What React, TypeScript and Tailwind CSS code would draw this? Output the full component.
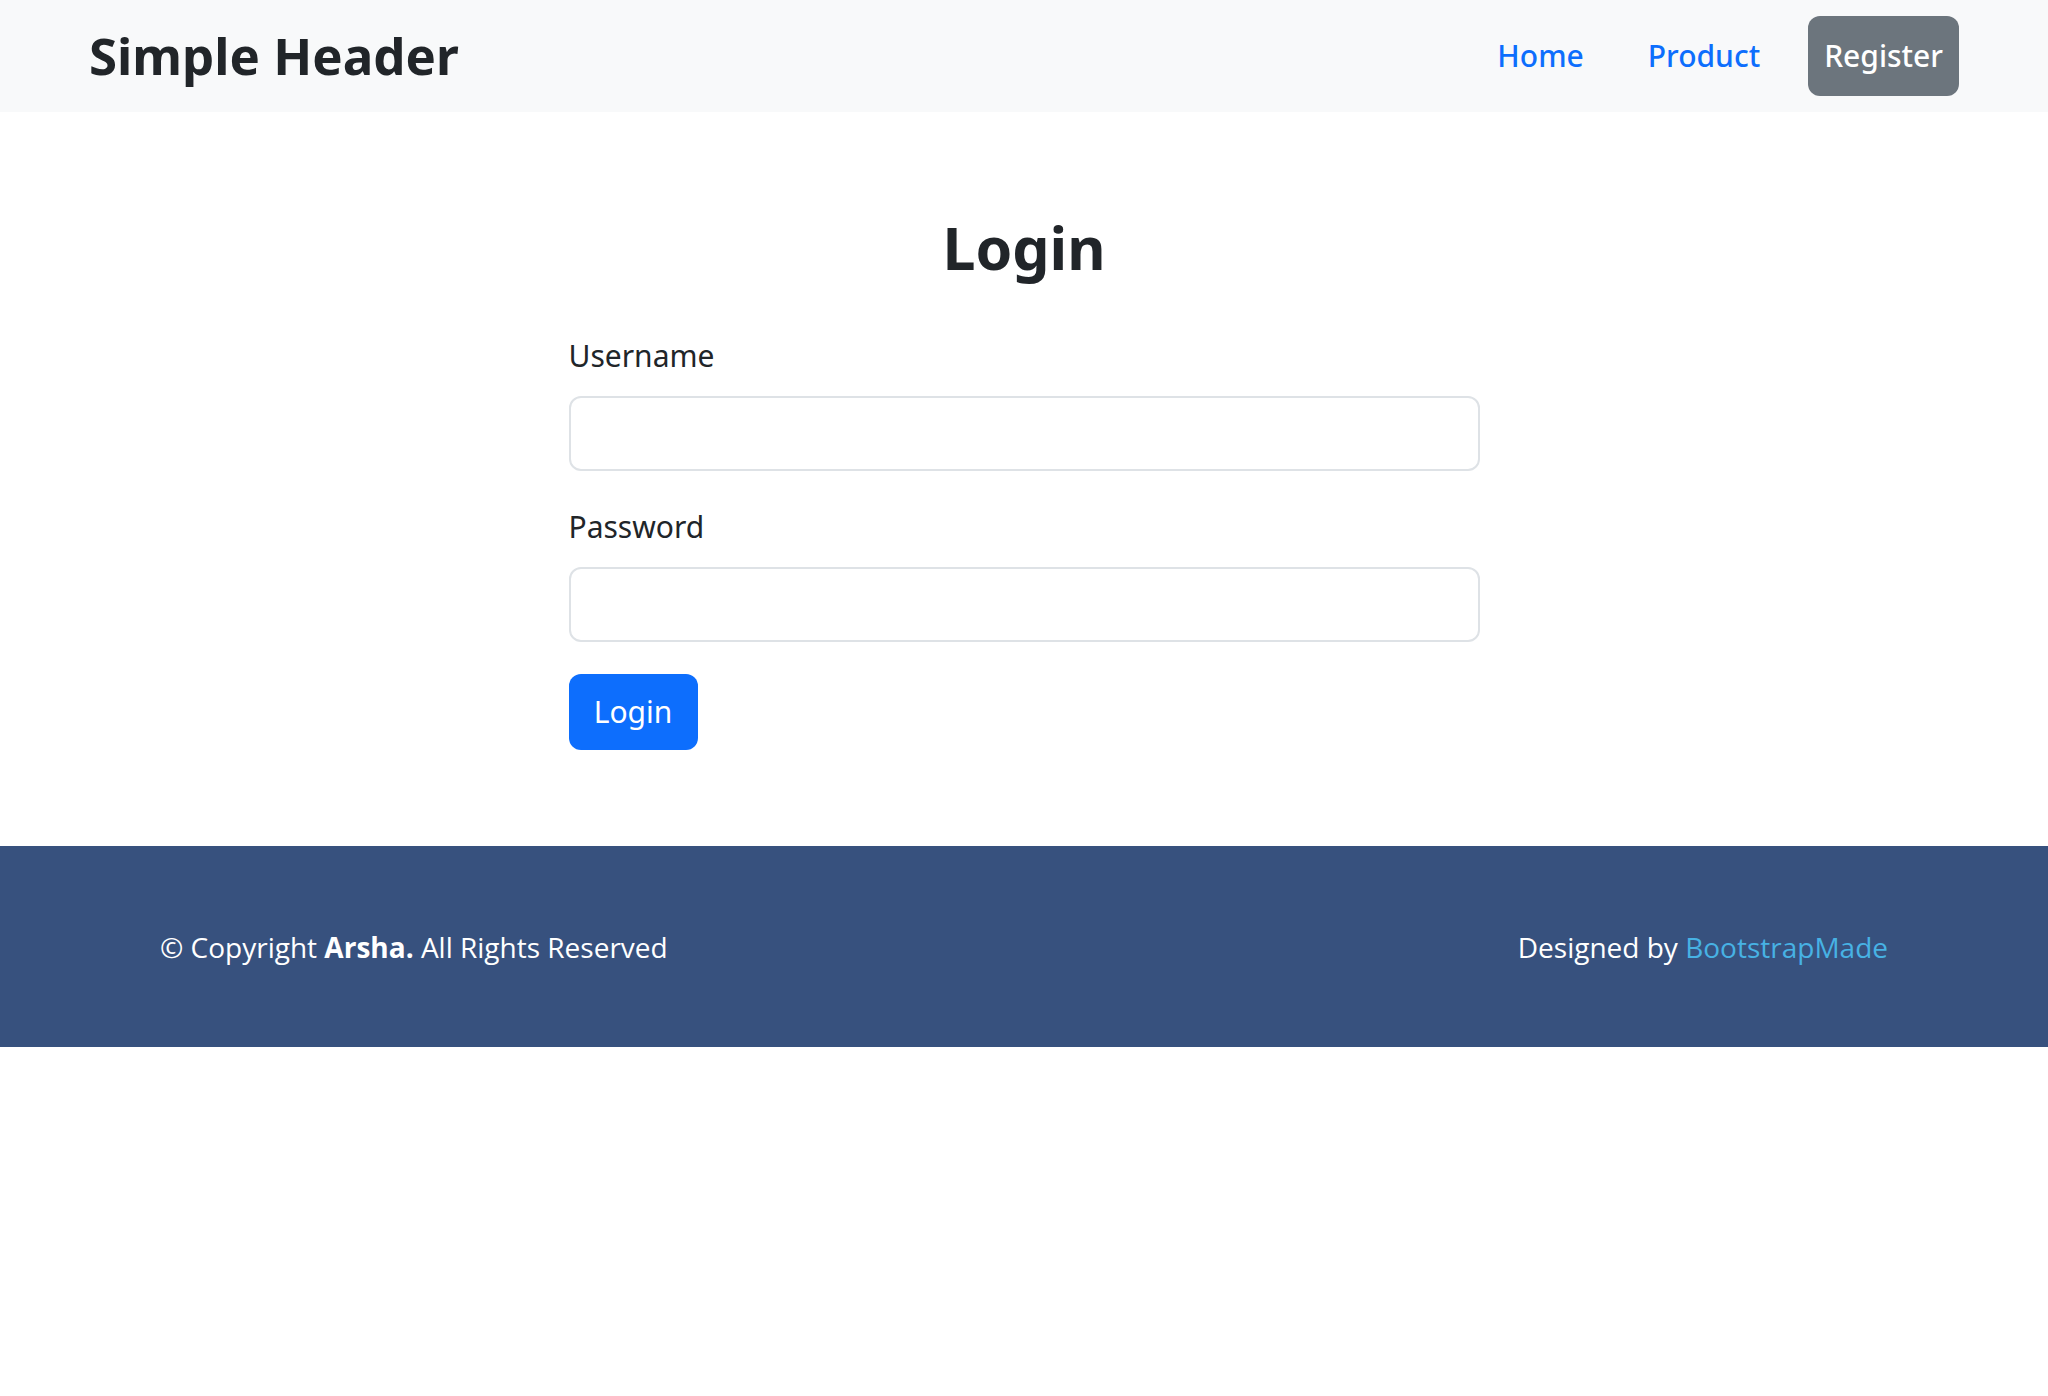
import { useState } from "react";

const ui = "font-['Noto_Sans',sans-serif]";

function Header() {
  return (
    <header className="flex h-[112px] items-center justify-between bg-[#f8f9fa] px-[89px]">
      <h3 className={`${ui} text-[51px] font-bold leading-[1.2] text-[#212529]`}>
        Simple Header
      </h3>
      <nav className={`${ui} flex items-center gap-8 text-[30px] font-medium leading-[48px]`}>
        <a href="#" className="px-4 text-[#0d6efd]">
          Home
        </a>
        <a href="#" className="px-4 text-[#0d6efd]">
          Product
        </a>
        <a
          href="#"
          className="rounded-[12px] bg-[#6c757d] px-4 py-4 text-white"
        >
          Register
        </a>
      </nav>
    </header>
  );
}

function LoginForm() {
  const [username, setUsername] = useState("");
  const [password, setPassword] = useState("");

  return (
    <main className="flex justify-center pt-[100px] pb-[96px]">
      <form
        className={`${ui} w-[911px] text-[#212529]`}
        onSubmit={(e) => e.preventDefault()}
      >
        <h2 className="mb-[49px] text-center text-[59px] font-bold leading-[1.2]">
          Login
        </h2>
        <div className="mb-[32px]">
          <label className="mb-[16px] block text-[30px] leading-[48px]">
            Username
          </label>
          <input
            value={username}
            onChange={(e) => setUsername(e.target.value)}
            className="block h-[75px] w-full rounded-[12px] border-2 border-[#dee2e6] bg-white px-6 text-[30px] outline-none"
          />
        </div>
        <div className="mb-[32px]">
          <label className="mb-[16px] block text-[30px] leading-[48px]">
            Password
          </label>
          <input
            type="password"
            value={password}
            onChange={(e) => setPassword(e.target.value)}
            className="block h-[75px] w-full rounded-[12px] border-2 border-[#dee2e6] bg-white px-6 text-[30px] outline-none"
          />
        </div>
        <button
          type="submit"
          className="h-[76px] w-[129px] rounded-[12px] bg-[#0d6efd] text-[30px] text-white"
        >
          Login
        </button>
      </form>
    </main>
  );
}

function Footer() {
  return (
    <footer className="flex h-[201px] items-center justify-between bg-[#37517e] px-[160px] pt-[2px] font-['Open_Sans',sans-serif] text-[28px] text-white">
      <div>
        © Copyright <strong className="font-bold">Arsha.</strong> All Rights
        Reserved
      </div>
      <div>
        Designed by{" "}
        <a href="#" className="text-[#47b2e4]">
          BootstrapMade
        </a>
      </div>
    </footer>
  );
}

export default function App() {
  return (
    <div className="min-h-screen bg-white">
      <Header />
      <LoginForm />
      <Footer />
    </div>
  );
}
